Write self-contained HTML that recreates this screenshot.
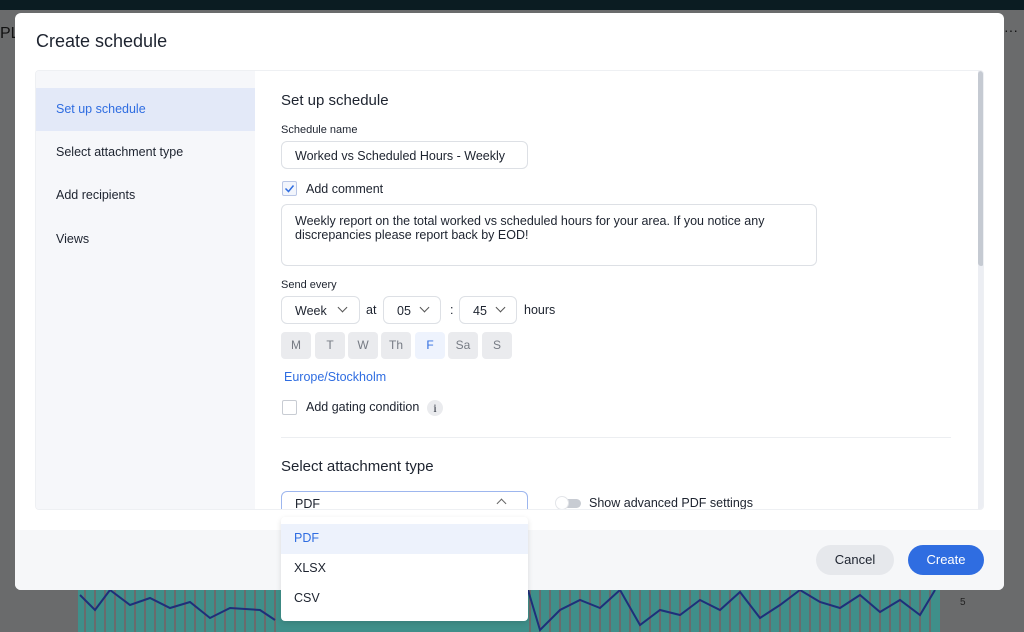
<!DOCTYPE html>
<html><head><meta charset="utf-8"><style>
*{box-sizing:border-box;margin:0;padding:0}
body{width:1024px;height:632px;overflow:hidden;position:relative;background:#6a6b6c;font-family:"Liberation Sans",sans-serif;color:#1d232f}
.abs{position:absolute}
.top{left:0;top:0;width:1024px;height:10px;background:#0b1c22}
.modal{left:15px;top:13px;width:989px;height:577px;background:#fff;border-radius:6px;overflow:hidden}
.title{left:21px;top:18px;font-size:18px;color:#1d232f}
.panel{left:20px;top:57px;width:949px;height:440px;border:1px solid #eef0f3;border-radius:4px;overflow:hidden;background:#fff}
.side{left:0;top:0;width:219px;height:440px;background:#f6f7fa}
.side div{position:absolute;left:20px;font-size:12.5px;color:#1d232f}
.sel{left:0!important;top:17px;width:219px;height:43px;background:#e3e9f8}
.footer{left:0;top:517px;width:989px;height:60px;background:#f6f7f9}
.btn{border-radius:16px;height:30px;font-size:13px;text-align:center;line-height:30px}
.input{border:1px solid #dde0e5;border-radius:6px;background:#fff;font-size:12.5px}
.day{width:30px;height:27px;border-radius:4px;background:#eaebee;color:#767b84;font-size:12px;text-align:center;line-height:27px}
.chev{width:7px;height:7px;border-right:1.5px solid #555;border-bottom:1.5px solid #555;transform:rotate(45deg)}
.lbl{font-size:11px;color:#1d232f}
.t{font-size:12.5px}
</style></head><body>
<div class="abs top"></div>
<div class="abs" style="left:0;top:25px;font-size:16px;color:#111">PL</div>
<div class="abs" style="left:1004px;top:22px;font-size:14px;color:#111">···</div>
<svg class="abs" style="left:0;top:590px" width="1024" height="42">
<rect x="78" y="0" width="862" height="42" fill="#3f8f8a"/>
<g stroke="#6a6b6c" stroke-width="2">
<path d="M85 0V42M95 0V42M105 0V42M115 0V42M125 0V42M135 0V42M145 0V42M155 0V42M165 0V42M175 0V42M185 0V42M195 0V42M205 0V42M215 0V42M225 0V42M235 0V42M245 0V42M255 0V42M265 0V42M275 0V42M530 0V42M540 0V42M550 0V42M560 0V42M570 0V42M580 0V42M590 0V42M600 0V42M610 0V42M620 0V42M630 0V42M640 0V42M650 0V42M660 0V42M670 0V42M680 0V42M690 0V42M700 0V42M710 0V42M720 0V42M730 0V42M740 0V42M750 0V42M760 0V42M770 0V42M780 0V42M790 0V42M800 0V42M810 0V42M820 0V42M830 0V42M840 0V42M850 0V42M860 0V42M870 0V42M880 0V42M890 0V42M900 0V42M910 0V42M920 0V42M930 0V42"/></g>
<path d="M80 5 L95 20 L110 0 L130 15 L150 8 L170 18 L190 12 L210 28 L230 18 L260 20 L275 30 M528 0 L540 40 L560 20 L580 10 L600 18 L620 0 L640 35 L660 20 L680 25 L700 10 L720 20 L740 2 L760 28 L780 15 L800 0 L820 12 L840 18 L860 5 L880 22 L900 10 L920 25 L935 0" fill="none" stroke="#1f2f7a" stroke-width="2"/>
<text x="960" y="15" font-size="10" fill="#222">5</text>
</svg>
<div class="abs modal">
 <div class="abs title">Create schedule</div>
 <div class="abs panel">
  <div class="abs side">
   <div class="sel"></div>
   <div style="top:31px;color:#2f6de1">Set up schedule</div>
   <div style="top:74px">Select attachment type</div>
   <div style="top:117px">Add recipients</div>
   <div style="top:161px">Views</div>
  </div>
  <div class="abs" style="left:942px;top:0;width:6px;height:440px;background:#eceef3"></div>
  <div class="abs" style="left:942px;top:0;width:6px;height:195px;background:#c5cad2;border-radius:3px"></div>
  <div class="abs" style="left:245px;top:21px;font-size:15px">Set up schedule</div>
  <div class="abs lbl" style="left:245px;top:53px">Schedule name</div>
  <div class="abs input" style="left:245px;top:70px;width:247px;height:28px;padding:7px 13px">Worked vs Scheduled Hours - Weekly</div>
  <div class="abs" style="left:246px;top:110px;width:15px;height:15px;border:1px solid #b9c6e6;border-radius:2px;background:#f2f5fc"></div>
  <svg class="abs" style="left:248px;top:112px" width="11" height="11"><path d="M1.5 5.5 L4.5 8.5 L9.5 2.5" fill="none" stroke="#2f6de1" stroke-width="1.5"/></svg>
  <div class="abs t" style="left:270px;top:111px">Add comment</div>
  <div class="abs input" style="left:245px;top:133px;width:536px;height:62px;padding:9px 13px;line-height:14px">Weekly report on the total worked vs scheduled hours for your area. If you notice any discrepancies please report back by EOD!</div>
  <div class="abs lbl" style="left:245px;top:208px">Send every</div>
  <div class="abs input" style="left:245px;top:225px;width:79px;height:28px;padding:7px 13px">Week</div>
  <div class="abs chev" style="left:303px;top:233px"></div>
  <div class="abs t" style="left:330px;top:232px">at</div>
  <div class="abs input" style="left:347px;top:225px;width:58px;height:28px;padding:7px 13px">05</div>
  <div class="abs chev" style="left:385px;top:233px"></div>
  <div class="abs t" style="left:414px;top:232px">:</div>
  <div class="abs input" style="left:423px;top:225px;width:58px;height:28px;padding:7px 13px">45</div>
  <div class="abs chev" style="left:461px;top:233px"></div>
  <div class="abs t" style="left:488px;top:232px">hours</div>
  <div class="abs day" style="left:245px;top:261px">M</div>
  <div class="abs day" style="left:279px;top:261px">T</div>
  <div class="abs day" style="left:312px;top:261px">W</div>
  <div class="abs day" style="left:345px;top:261px">Th</div>
  <div class="abs day" style="left:379px;top:261px;background:#eef3fd;color:#2f6de1">F</div>
  <div class="abs day" style="left:412px;top:261px">Sa</div>
  <div class="abs day" style="left:446px;top:261px">S</div>
  <div class="abs t" style="left:248px;top:299px;color:#2f6de1">Europe/Stockholm</div>
  <div class="abs" style="left:246px;top:329px;width:15px;height:15px;border:1px solid #c8ccd3;border-radius:2px"></div>
  <div class="abs t" style="left:270px;top:329px">Add gating condition</div>
  <div class="abs" style="left:391px;top:329px;width:16px;height:16px;border-radius:8px;background:#eaebee;font-size:12px;text-align:center;line-height:16px;font-family:'Liberation Serif',serif">i</div>
  <div class="abs" style="left:245px;top:366px;width:670px;height:1px;background:#eceef1"></div>
  <div class="abs" style="left:245px;top:387px;font-size:15px">Select attachment type</div>
  <div class="abs input" style="left:245px;top:420px;width:247px;height:28px;padding:5px 13px;border-color:#9db6ee">PDF</div>
  <div class="abs chev" style="left:462px;top:429px;transform:rotate(-135deg);border-color:#666"></div>
  <div class="abs" style="left:521px;top:428px;width:24px;height:9px;border-radius:5px;background:#c8ccd3"></div>
  <div class="abs" style="left:519px;top:425px;width:14px;height:14px;border-radius:7px;background:#fff;border:1px solid #e3e5e9"></div>
  <div class="abs t" style="left:553px;top:425px">Show advanced PDF settings</div>
 </div>
 <div class="abs footer"></div>
 <div class="abs btn" style="left:801px;top:532px;width:78px;background:#e6e8ec;color:#1d232f">Cancel</div>
 <div class="abs btn" style="left:893px;top:532px;width:76px;background:#2f6de1;color:#fff">Create</div>
</div>
<div class="abs" style="left:281px;top:517px;width:247px;height:104px;background:#fff;border-radius:4px;box-shadow:0 2px 6px rgba(0,0,0,.12)">
 <div class="abs" style="left:0;top:7px;width:247px;height:30px;background:#edf2fc"></div>
 <div class="abs t" style="left:13px;top:14px;color:#2f6de1">PDF</div>
 <div class="abs t" style="left:13px;top:44px">XLSX</div>
 <div class="abs t" style="left:13px;top:74px">CSV</div>
</div>
</body></html>
